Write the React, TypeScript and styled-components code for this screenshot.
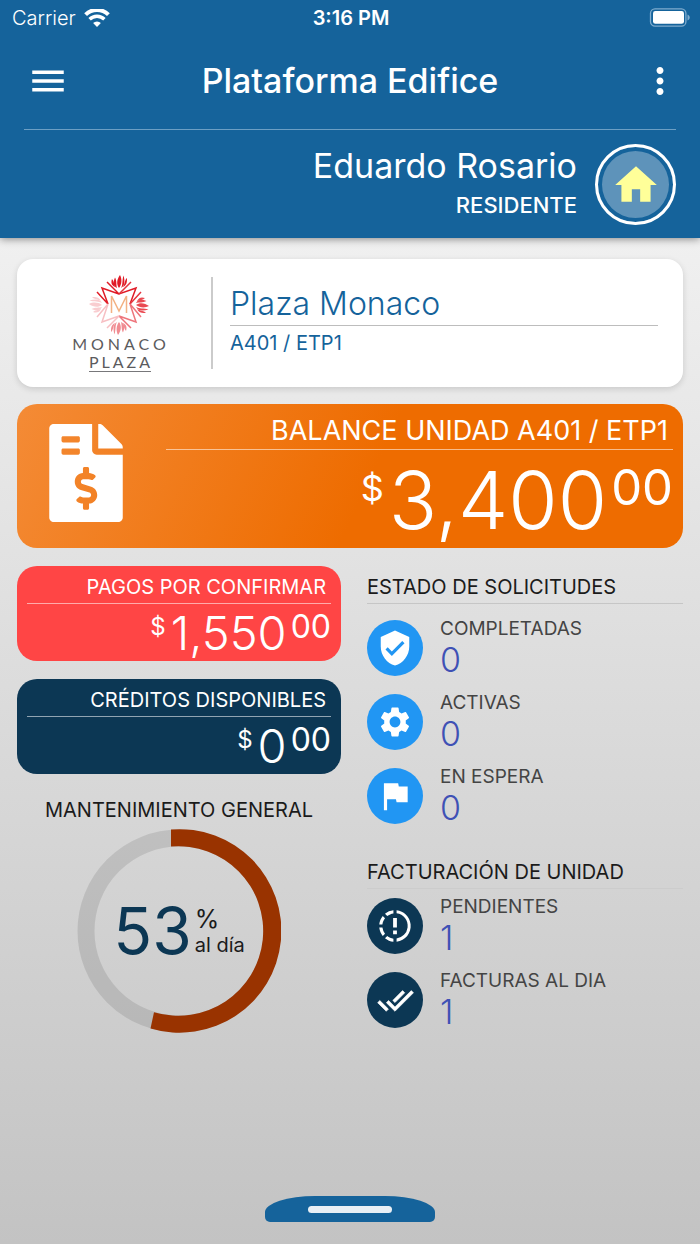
import React from "react";
import styled, { createGlobalStyle } from "styled-components";
import {
  MdMenu,
  MdMoreVert,
  MdHome,
  MdVerifiedUser,
  MdSettings,
  MdFlag,
} from "react-icons/md";
import { FaFileInvoiceDollar } from "react-icons/fa";

const GlobalStyle = createGlobalStyle`
  *, *::before, *::after { box-sizing: border-box; }
  body {
    margin: 0;
    font-family: Inter, "Liberation Sans", sans-serif;
    color: #1b1b1b;
  }
  h1, h2, p, ul { margin: 0; padding: 0; font-weight: 400; }
  button { border: 0; padding: 0; background: none; color: inherit; font: inherit; cursor: pointer; }
  svg { display: block; }
`;

const Screen = styled.div`
  display: flex;
  flex-direction: column;
  min-height: 100vh;
`;

const Header = styled.header`
  z-index: 1;
  padding: 0 24px 13px;
  background: #15639b;
  color: #fff;
  box-shadow: 0 1px 8px rgba(0, 0, 0, 0.45);
`;

const Body = styled.div`
  display: flex;
  flex: 1;
  flex-direction: column;
  background: linear-gradient(#f0f0f0, #c3c3c3);
`;

const StatusBar = styled.div`
  display: grid;
  grid-template-columns: 1fr auto 1fr;
  align-items: center;
  height: 36px;
  margin: 0 -14px 0 -12px;
  font-size: 20px;
  line-height: 36px;
`;

const Carrier = styled.div`
  display: flex;
  align-items: center;
  gap: 8px;
  font-weight: 300;
`;

const Clock = styled.div`
  font-weight: 600;
`;

const BatterySlot = styled.div`
  display: flex;
  justify-content: flex-end;
`;

const NavBar = styled.div`
  display: grid;
  grid-template-columns: 48px 1fr 48px;
  align-items: center;
  height: 94px;
  padding-bottom: 3px;
  border-bottom: 1px solid #6c9fc4;
`;

const NavTitle = styled.h1`
  font-size: 34px;
  line-height: 44px;
  font-weight: 500;
  text-align: center;
`;

const IconButton = styled.button<{ $end?: boolean }>`
  display: flex;
  width: 48px;
  height: 48px;
  align-items: center;
  justify-content: center;
  margin-left: ${(p) => (p.$end ? 8 : 0)}px;
`;

const UserRow = styled.div`
  display: flex;
  justify-content: flex-end;
  gap: 18px;
  padding-top: 14px;
`;

const UserText = styled.div`
  text-align: right;
`;

const UserName = styled.p`
  font-size: 34px;
  line-height: 44px;
`;

const UserRole = styled.p`
  font-size: 22px;
  line-height: 35px;
  font-weight: 500;
`;

const Avatar = styled.button`
  display: flex;
  align-items: center;
  justify-content: center;
  width: 81px;
  height: 81px;
  border: 3px solid #fff;
  border-radius: 50%;
  box-shadow: inset 0 0 0 4px #15639b;
  background: #5e93ba;
  color: #ffff99;
`;

const Content = styled.main`
  display: flex;
  flex-direction: column;
  gap: 17px;
  padding: 21px 17px;
`;

const PropertyCard = styled.section`
  display: flex;
  padding: 18px 25px 18px 0;
  border-radius: 16px;
  background: #fff;
  box-shadow: 0 2px 6px rgba(0, 0, 0, 0.14);
`;

const LogoSlot = styled.div`
  flex: 0 0 196px;
  display: flex;
  justify-content: center;
  padding-left: 9px;
  border-right: 2px solid #cbcbcb;
`;

const PropertyInfo = styled.div`
  flex: 1;
  padding: 5px 0 0 17px;
  color: #15639b;
`;

const PropertyName = styled.h2`
  border-bottom: 1px solid #bdbdbd;
  font-size: 32px;
  line-height: 43px;
  font-weight: 300;
`;

const PropertyUnit = styled.p`
  font-size: 20px;
  line-height: 34px;
`;

const BalanceCard = styled.section`
  display: flex;
  justify-content: space-between;
  padding: 8px 10px 8px 32px;
  border-radius: 20px;
  background: linear-gradient(115deg, #f48b36 0%, #ee6c00 53%);
  color: #fff;
`;

const InvoiceIcon = styled(FaFileInvoiceDollar)`
  width: 74px;
  height: 98px;
  margin-top: 12px;
`;

const BalanceBody = styled.div`
  flex: 0 1 507px;
`;

const BalanceTitle = styled.h2`
  padding-right: 5px;
  border-bottom: 1px solid rgba(255, 255, 255, 0.55);
  font-size: 27px;
  line-height: 37px;
  text-align: right;
`;

const Amount = styled.p<{ $large?: boolean }>`
  display: flex;
  justify-content: flex-end;
  padding-top: ${(p) => (p.$large ? 10 : 5)}px;
`;

const Currency = styled.span<{ $large?: boolean }>`
  margin-right: 5px;
  font-size: ${(p) => (p.$large ? 36 : 24)}px;
  line-height: ${(p) => (p.$large ? 56 : 36)}px;
`;

const Whole = styled.span<{ $large?: boolean }>`
  font-size: ${(p) => (p.$large ? 80 : 47)}px;
  line-height: ${(p) => (p.$large ? 80 : 48)}px;
  font-weight: 300;
`;

const Cents = styled.span<{ $large?: boolean }>`
  margin-left: 4px;
  font-size: ${(p) => (p.$large ? 49 : 32)}px;
  line-height: ${(p) => (p.$large ? 56 : 36)}px;
`;

const Columns = styled.div`
  display: grid;
  grid-template-columns: 324fr 316fr;
  gap: 26px;
  padding-top: 1px;
`;

const Column = styled.div`
  display: flex;
  flex-direction: column;
`;

const MiniCard = styled.section<{ $color: string }>`
  margin-bottom: 18px;
  padding: 5px 10px 4px;
  border-radius: 20px;
  background: ${(p) => p.$color};
  color: #fff;
`;

const MiniTitle = styled.h2`
  padding-right: 5px;
  border-bottom: 1px solid rgba(255, 255, 255, 0.55);
  font-size: 20px;
  line-height: 32px;
  text-align: right;
`;

const ChartTitle = styled.h2`
  padding: 2px 0 3px;
  font-size: 20px;
  line-height: 32px;
  text-align: center;
`;

const Donut = styled.div`
  display: grid;
  place-items: center;
  > * { grid-area: 1 / 1; }
`;

const DonutLabel = styled.div`
  display: flex;
  align-items: center;
  gap: 3px;
`;

const Percent = styled.span`
  font-size: 64px;
  line-height: 64px;
  color: #0c3754;
`;

const PercentNote = styled.span`
  display: flex;
  flex-direction: column;
  padding-top: 2px;
  font-size: 20px;
  line-height: 26px;
`;

const PercentSign = styled.span`
  font-size: 25px;
`;

const SectionTitle = styled.h2<{ $faint?: boolean }>`
  padding-top: 5px;
  border-bottom: 1px solid ${(p) => (p.$faint ? "#cccccc" : "#c6c6c6")};
  font-size: 20px;
  line-height: 32px;
`;

const StatList = styled.ul<{ $tight?: boolean }>`
  display: flex;
  flex-direction: column;
  gap: 12px;
  margin: ${(p) => (p.$tight ? "6px 0 0" : "13px 0 24px")};
  list-style: none;
`;

const StatRow = styled.li`
  display: flex;
  align-items: center;
  gap: 17px;
`;

const StatIcon = styled.span<{ $color: string }>`
  display: flex;
  align-items: center;
  justify-content: center;
  width: 56px;
  height: 56px;
  border-radius: 50%;
  background: ${(p) => p.$color};
  color: #fff;
`;

const StatLabel = styled.p`
  font-size: 19px;
  line-height: 24px;
  color: #444;
`;

const StatValue = styled.p`
  font-size: 34px;
  line-height: 38px;
  font-weight: 300;
  color: #3f51b5;
`;

const Footer = styled.footer`
  display: flex;
  justify-content: center;
  margin-top: auto;
  padding-bottom: 22px;
`;

const DrawerHandle = styled.button`
  display: flex;
  justify-content: center;
  width: 170px;
  height: 26px;
  padding-top: 10px;
  border-radius: 50px 50px 5px 5px / 16px 16px 5px 5px;
  background: #15639b;
`;

const HandleBar = styled.span`
  width: 84px;
  height: 7px;
  border-radius: 4px;
  background: #e8eff5;
`;

const WifiIcon = () => (
  <svg width="26" height="19" viewBox="0 0 26 19" fill="none" stroke="#fff" aria-hidden="true">
    <path d="M1.600 5.600a16.200 16.200 0 0 1 22.800 0" strokeWidth="4" />
    <path d="M5.600 10.300a10.400 10.400 0 0 1 14.800 0" strokeWidth="3.400" />
    <path d="M13 18l-3.900-4a5.600 5.600 0 0 1 7.800 0z" fill="#fff" stroke="none" />
  </svg>
);

const BatteryIcon = () => (
  <svg width="41" height="20" viewBox="0 0 41 20" aria-hidden="true">
    <rect x="1.500" y="0.8" width="35.4" height="17.4" rx="4.5" fill="none" stroke="#7facce" strokeWidth="1.3" />
    <rect x="4" y="3" width="31" height="12.800" rx="2.4" fill="#fff" />
    <path d="M38.500 6.500v6c1.300-.6 2.200-1.700 2.200-3s-.9-2.400-2.200-3z" fill="#7facce" />
  </svg>
);

const ProgressAlertIcon = () => (
  <svg width="38" height="38" viewBox="0 0 24 24" fill="currentColor" aria-hidden="true">
    <path d="M13 2v2c4.390.54 7.500 4.530 6.960 8.920A8.010 8.010 0 0 1 13 19.880v2c5.500-.6 9.450-5.540 8.850-11.030C21.330 6.190 17.660 2.500 13 2zM11 2c-1.960.18-3.810.95-5.330 2.200L7.100 5.740C8.220 4.840 9.570 4.260 11 4.060zM4.260 5.670C3 7.190 2.240 9.040 2.050 11h2c.19-1.420.75-2.770 1.640-3.900zM2.060 13c.2 1.960.97 3.810 2.210 5.330l1.420-1.430A8.020 8.020 0 0 1 4.060 13zM7.100 18.370l-1.430 1.370C7.180 21 9.040 21.790 11 22v-2c-1.420-.18-2.770-.75-3.900-1.630zM13.200 13V7h-2.400v6zM13.200 17.200v-2.400h-2.400v2.400z" />
  </svg>
);

const CheckAllIcon = () => (
  <svg width="37" height="37" viewBox="0 0 24 24" fill="currentColor" stroke="currentColor" strokeWidth="0.4" aria-hidden="true">
    <path d="M.41 13.410L6 19l1.410-1.420L1.830 12zM22.240 5.580L11.660 16.170 7.500 12l-1.430 1.410L11.660 19l12-12zM18 7l-1.410-1.420-6.350 6.350 1.420 1.410z" />
  </svg>
);

const Flower = ({ angle, color }: { angle: number; color: string }) => (
  <g transform={`rotate(${angle})`} fill={color}>
    <path d="M0-17C-3-21-2-26 1-30C3-26 3-21 0-17z" />
    <path d="M-2-17C-6-19-6-23-4-27.500C-2-24-3-20-2-17z" />
    <path d="M-4-18C-8-20-8-23-7-26C-5-24-5-21-4-18z" />
    <path d="M2-17C6-19 6-24 4.500-29.500C3-25 4-20 2-17z" />
    <path d="M4-18C8-20 8-23 8-27C5.500-25 6-21 4-18z" />
  </g>
);

const MonacoLogo = () => (
  <svg width="100" height="92" viewBox="0 0 100 92" overflow="visible" role="img" aria-label="Monaco Plaza">
    <g transform="translate(50 28)">
      <Flower angle={0} color="#e01b26" />
      <Flower angle={90} color="#ea4a52" />
      <Flower angle={180} color="#f08c92" />
      <Flower angle={270} color="#f9cdd0" />
      <g fill="none" strokeWidth="1.500">
        <path d="M-12-23L0-11L17-17L11-1M-22-13L-11-1L-17-17L0-11" stroke="#e01b26" />
        <path d="M12-23L0-11M22-13L11-1" stroke="#e5353f" />
        <path d="M11-1L17 17L0 11L12 23M11-1L22 12" stroke="#ee757c" />
        <path d="M-11-1L-17 17L0 11L-12 23M-11-1L-22 12" stroke="#f7bfc3" />
        <path d="M-7.500 8V-9L0 6L7.500-9V8" stroke="#f3b183" />
      </g>
    </g>
    <g fill="#5b5b5d" fontFamily="Lato, sans-serif" fontSize="16" textAnchor="middle">
      <text x="52" y="73" letterSpacing="4">MONACO</text>
      <text x="52" y="91" letterSpacing="3">PLAZA</text>
    </g>
    <path d="M20 94.500H82" stroke="#77777a" />
  </svg>
);

type MoneyProps = { whole: string; cents: string; large?: boolean };

const Money = ({ whole, cents, large }: MoneyProps) => (
  <Amount $large={large}>
    <Currency $large={large}>$</Currency>
    <Whole $large={large}>{whole}</Whole>
    <Cents $large={large}>{cents}</Cents>
  </Amount>
);

type StatProps = { icon: React.ReactNode; color: string; label: string; value: number };

const Stat = ({ icon, color, label, value }: StatProps) => (
  <StatRow>
    <StatIcon $color={color}>{icon}</StatIcon>
    <div>
      <StatLabel>{label}</StatLabel>
      <StatValue>{value}</StatValue>
    </div>
  </StatRow>
);

const BLUE = "#2196f3";
const NAVY = "#0c3754";

export default function App() {
  return (
    <Screen>
      <GlobalStyle />
      <Header>
        <StatusBar>
          <Carrier>
            Carrier
            <WifiIcon />
          </Carrier>
          <Clock>3:16 PM</Clock>
          <BatterySlot>
            <BatteryIcon />
          </BatterySlot>
        </StatusBar>
        <NavBar>
          <IconButton aria-label="Menú">
            <MdMenu size={42} />
          </IconButton>
          <NavTitle>Plataforma Edifice</NavTitle>
          <IconButton $end aria-label="Más opciones">
            <MdMoreVert size={42} />
          </IconButton>
        </NavBar>
        <UserRow>
          <UserText>
            <UserName>Eduardo Rosario</UserName>
            <UserRole>RESIDENTE</UserRole>
          </UserText>
          <Avatar aria-label="Inicio">
            <MdHome size={50} />
          </Avatar>
        </UserRow>
      </Header>

      <Body>
        <Content>
          <PropertyCard>
            <LogoSlot>
              <MonacoLogo />
            </LogoSlot>
            <PropertyInfo>
              <PropertyName>Plaza Monaco</PropertyName>
              <PropertyUnit>A401 / ETP1</PropertyUnit>
            </PropertyInfo>
          </PropertyCard>

          <BalanceCard>
            <InvoiceIcon />
            <BalanceBody>
              <BalanceTitle>BALANCE UNIDAD A401 / ETP1</BalanceTitle>
              <Money whole="3,400" cents="00" large />
            </BalanceBody>
          </BalanceCard>

          <Columns>
            <Column>
              <MiniCard $color="#ff4545">
                <MiniTitle>PAGOS POR CONFIRMAR</MiniTitle>
                <Money whole="1,550" cents="00" />
              </MiniCard>
              <MiniCard $color={NAVY}>
                <MiniTitle>CRÉDITOS DISPONIBLES</MiniTitle>
                <Money whole="0" cents="00" />
              </MiniCard>
              <ChartTitle>MANTENIMIENTO GENERAL</ChartTitle>
              <Donut>
                <svg width="204" height="204" viewBox="-102 -102 204 204" aria-hidden="true">
                  <circle r="93" fill="none" stroke="#000" strokeOpacity="0.1" strokeWidth="17" />
                  <path
                    d="M-8-101.500A101.800 101.800 0 1 1-28.500 97.500L-25 81.200A84.800 84.800 0 1 0-8-84.500z"
                    fill="#993300"
                  />
                </svg>
                <DonutLabel>
                  <Percent>53</Percent>
                  <PercentNote>
                    <PercentSign>%</PercentSign>
                    al día
                  </PercentNote>
                </DonutLabel>
              </Donut>
            </Column>

            <Column>
              <SectionTitle>ESTADO DE SOLICITUDES</SectionTitle>
              <StatList>
                <Stat icon={<MdVerifiedUser size={38} />} color={BLUE} label="COMPLETADAS" value={0} />
                <Stat icon={<MdSettings size={36} />} color={BLUE} label="ACTIVAS" value={0} />
                <Stat icon={<MdFlag size={38} />} color={BLUE} label="EN ESPERA" value={0} />
              </StatList>
              <SectionTitle $faint>FACTURACIÓN DE UNIDAD</SectionTitle>
              <StatList $tight>
                <Stat icon={<ProgressAlertIcon />} color={NAVY} label="PENDIENTES" value={1} />
                <Stat icon={<CheckAllIcon />} color={NAVY} label="FACTURAS AL DIA" value={1} />
              </StatList>
            </Column>
          </Columns>
        </Content>

        <Footer>
          <DrawerHandle aria-label="Abrir panel">
            <HandleBar />
          </DrawerHandle>
        </Footer>
      </Body>
    </Screen>
  );
}
